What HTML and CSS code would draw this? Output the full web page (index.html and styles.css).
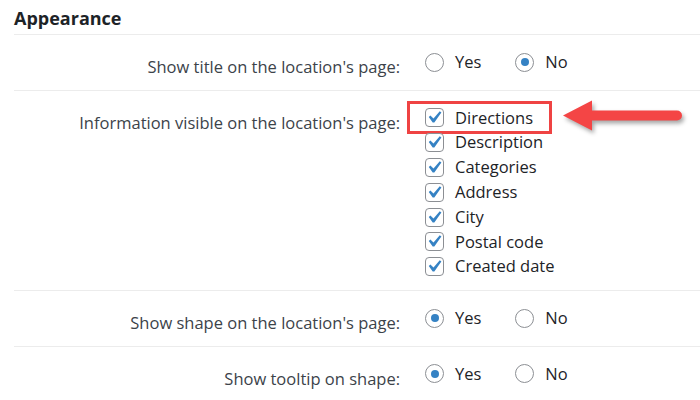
FILE: index.html
```html
<!DOCTYPE html>
<html lang="en">
<head>
<meta charset="utf-8">
<title>Appearance settings</title>
<link rel="stylesheet" href="styles.css">
</head>
<body>
<div class="panel">
  <h2 class="section-title">Appearance</h2>

  <div class="row">
    <div class="label">Show title on the location's page:</div>
    <div class="field">
      <div class="options">
        <label class="opt"><span class="radio"></span><span>Yes</span></label>
        <label class="opt"><span class="radio checked"></span><span>No</span></label>
      </div>
    </div>
  </div>

  <div class="row">
    <div class="label">Information visible on the location's page:</div>
    <div class="field field-list">
      <ul class="checklist">
        <li class="check-item highlighted">
          <span class="checkbox"><svg viewBox="3.5 3 14 14"><path d="M14.83 4.89l1.34.94-5.81 8.38H9.02L5.78 9.67l1.34-1.25 2.57 2.4z"/></svg></span>
          <span>Directions</span>
          <span class="callout-box"></span>
          <svg class="callout-arrow" viewBox="0 0 135 46" width="135" height="46"><path d="M8 22.5 L37 7.5 L37 17.5 L122 17.5 A5 5 0 0 1 122 27.5 L37 27.5 L37 37.5 Z"/></svg>
        </li>
        <li class="check-item"><span class="checkbox"><svg viewBox="3.5 3 14 14"><path d="M14.83 4.89l1.34.94-5.81 8.38H9.02L5.78 9.67l1.34-1.25 2.57 2.4z"/></svg></span><span>Description</span></li>
        <li class="check-item"><span class="checkbox"><svg viewBox="3.5 3 14 14"><path d="M14.83 4.89l1.34.94-5.81 8.38H9.02L5.78 9.67l1.34-1.25 2.57 2.4z"/></svg></span><span>Categories</span></li>
        <li class="check-item"><span class="checkbox"><svg viewBox="3.5 3 14 14"><path d="M14.83 4.89l1.34.94-5.81 8.38H9.02L5.78 9.67l1.34-1.25 2.57 2.4z"/></svg></span><span>Address</span></li>
        <li class="check-item"><span class="checkbox"><svg viewBox="3.5 3 14 14"><path d="M14.83 4.89l1.34.94-5.81 8.38H9.02L5.78 9.67l1.34-1.25 2.57 2.4z"/></svg></span><span>City</span></li>
        <li class="check-item"><span class="checkbox"><svg viewBox="3.5 3 14 14"><path d="M14.83 4.89l1.34.94-5.81 8.38H9.02L5.78 9.67l1.34-1.25 2.57 2.4z"/></svg></span><span>Postal code</span></li>
        <li class="check-item"><span class="checkbox"><svg viewBox="3.5 3 14 14"><path d="M14.83 4.89l1.34.94-5.81 8.38H9.02L5.78 9.67l1.34-1.25 2.57 2.4z"/></svg></span><span>Created date</span></li>
      </ul>
    </div>
  </div>

  <div class="row">
    <div class="label">Show shape on the location's page:</div>
    <div class="field">
      <div class="options">
        <label class="opt"><span class="radio checked"></span><span>Yes</span></label>
        <label class="opt"><span class="radio"></span><span>No</span></label>
      </div>
    </div>
  </div>

  <div class="row last">
    <div class="label">Show tooltip on shape:</div>
    <div class="field">
      <div class="options">
        <label class="opt"><span class="radio checked"></span><span>Yes</span></label>
        <label class="opt"><span class="radio"></span><span>No</span></label>
      </div>
    </div>
  </div>
</div>
</body>
</html>
```

FILE: styles.css
```css
* { box-sizing: border-box; }

html, body {
  margin: 0;
  padding: 0;
  background: #ffffff;
}

body {
  font-family: "Open Sans", "Noto Sans", "Liberation Sans", sans-serif;
  font-size: 16.5px;
  color: #2c3338;
  overflow: hidden;
}

.panel {
  margin-left: 14px;
}

.section-title {
  margin: 0;
  height: 35px;
  padding-top: 5px;
  font-size: 18px;
  line-height: 26px;
  font-weight: 700;
  color: #1d2327;
  border-bottom: 1px solid #ececec;
}

.row {
  display: grid;
  grid-template-columns: 386px 1fr;
  border-bottom: 1px solid #ececec;
}

.row.last {
  border-bottom: none;
}

.label {
  text-align: right;
  padding-top: 20px;
  line-height: 24.5px;
  color: #3c434a;
}

.field {
  padding: 15px 0 15px 25px;
  line-height: 24.5px;
}

.field-list {
  padding-bottom: 11px;
}

.options {
  display: flex;
  align-items: center;
  gap: 34px;
}

.opt {
  display: flex;
  align-items: center;
  gap: 11px;
  color: #1d2327;
}

.radio {
  width: 19px;
  height: 19px;
  border: 1px solid #8c8f94;
  border-radius: 50%;
  background: #fff;
  display: flex;
  align-items: center;
  justify-content: center;
}

.radio.checked::after {
  content: "";
  width: 8px;
  height: 8px;
  border-radius: 50%;
  background: #3582c4;
}

.checklist {
  list-style: none;
  margin: 0;
  padding: 0;
}

.check-item {
  position: relative;
  display: flex;
  align-items: center;
  gap: 11px;
  height: 24.8px;
  color: #1d2327;
}

.checkbox {
  width: 19px;
  height: 19px;
  border: 1px solid #8c8f94;
  border-radius: 4px;
  background: #fff;
  display: flex;
  align-items: center;
  justify-content: center;
}

.checkbox svg {
  width: 17px;
  height: 17px;
  fill: #3582c4;
}

.callout-box {
  position: absolute;
  left: -18px;
  top: -5px;
  width: 145px;
  height: 33px;
  border: 3px solid #ef4343;
}

.callout-arrow {
  position: absolute;
  left: 130px;
  top: -13px;
  fill: #f44545;
  filter: drop-shadow(2px 3px 2px rgba(0, 0, 0, 0.35));
}
```
